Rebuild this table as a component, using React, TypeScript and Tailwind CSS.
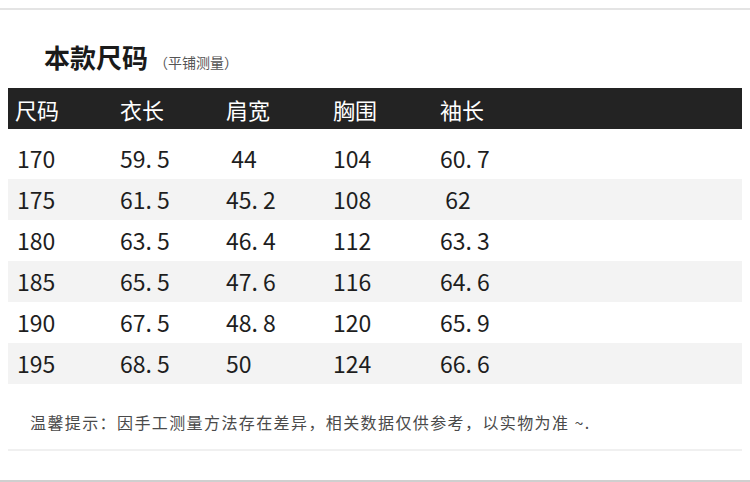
import React from 'react';

const headers = ['尺码', '衣长', '肩宽', '胸围', '袖长'];

const rows: string[][] = [
  ['170', '59. 5', ' 44', '104', '60. 7'],
  ['175', '61. 5', '45. 2', '108', ' 62'],
  ['180', '63. 5', '46. 4', '112', '63. 3'],
  ['185', '65. 5', '47. 6', '116', '64. 6'],
  ['190', '67. 5', '48. 8', '120', '65. 9'],
  ['195', '68. 5', '50', '124', '66. 6'],
];

const colW = ['w-[105px]', 'w-[106px]', 'w-[107px]', 'w-[107px]', 'w-[120px]'];

const App: React.FC = () => {
  return (
    <div className="w-[750px] h-[482px] bg-white overflow-hidden flex flex-col font-['Noto_Sans_CJK_SC',sans-serif] text-[#1e1e1e]">
      <div className="mt-[8px] h-[2px] bg-[#e4e4e4]" />

      {/* title */}
      <div className="flex items-end pl-[44px] h-[62px] pb-[2px]">
        <span className="text-[26px] leading-none font-bold text-[#1a1a1a]">本款尺码</span>
        <span className="ml-[6px] text-[14px] leading-none text-[#555] pb-[1px]">（平铺测量）</span>
      </div>

      {/* header bar */}
      <div className="mx-[8px] mt-[16px] h-[41px] bg-[#232323] flex items-center pl-[7px] text-white text-[22px] leading-none">
        {headers.map((h, i) => (
          <div key={h} className={colW[i]}>
            {h}
          </div>
        ))}
      </div>

      {/* rows */}
      <div className="mt-[9px] mx-[8px] flex flex-col">
        {rows.map((r, idx) => (
          <div
            key={r[0]}
            className={`h-[41px] flex items-center pl-[9px] text-[23px] leading-none whitespace-pre ${
              idx % 2 === 1 ? 'bg-[#f3f3f3]' : 'bg-white'
            }`}
          >
            {r.map((v, i) => (
              <div key={i} className={i === 0 ? 'w-[103px]' : colW[i]}>
                {v}
              </div>
            ))}
          </div>
        ))}
      </div>

      {/* note */}
      <div className="mx-[8px] mt-[30px] pl-[22px] text-[16px] leading-none tracking-[1.4px] text-[#4a4a4a]">
        温馨提示：因手工测量方法存在差异，相关数据仅供参考，以实物为准 ~.
      </div>
      <div className="mx-[8px] mt-[19px] h-[2px] bg-[#f0f0f0]" />
      <div className="flex-1" />
      <div className="h-[2px] bg-[#cfcfcf]" />
    </div>
  );
};

export default App;
